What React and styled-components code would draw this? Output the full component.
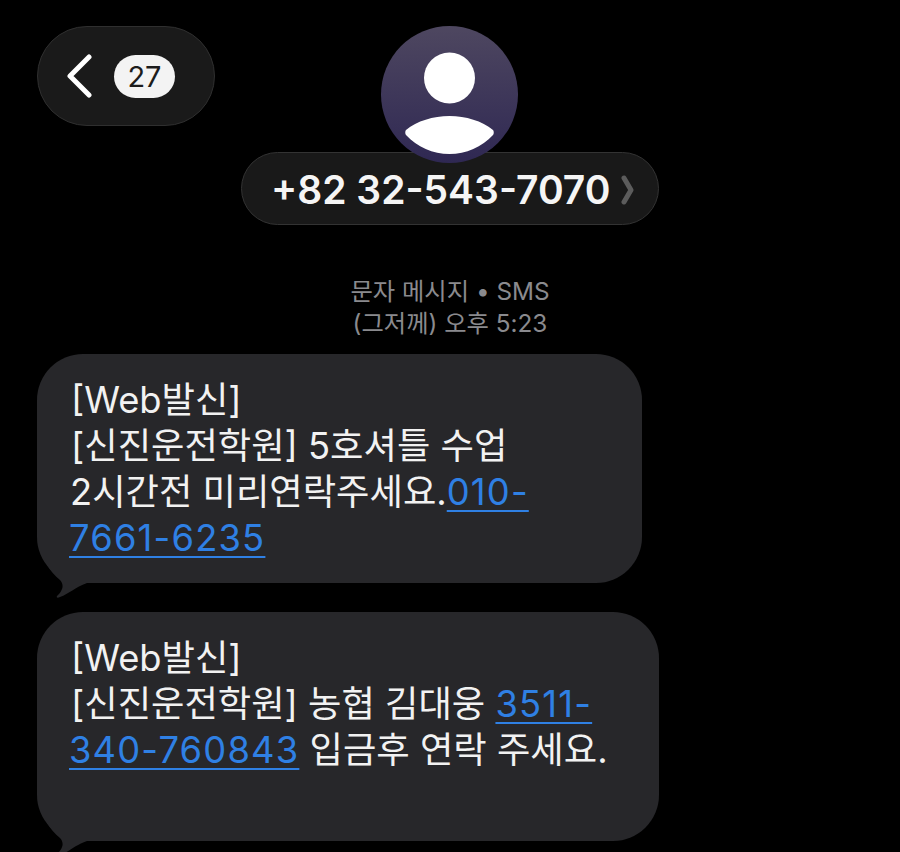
import React from "react";
import styled, { createGlobalStyle } from "styled-components";

const GlobalStyle = createGlobalStyle`
  html, body {
    margin: 0;
    padding: 0;
    background: #000;
  }
`;

const Page = styled.div`
  width: 900px;
  height: 852px;
  overflow: hidden;
  background: #000;
  font-family: Inter, "Noto Sans CJK KR", sans-serif;
  color: #f5f5f5;
`;

const Header = styled.header`
  display: grid;
  grid-template-columns: 1fr auto 1fr;
  padding: 26px 37px 0;
`;

const BackPill = styled.div`
  width: 178px;
  height: 100px;
  box-sizing: border-box;
  display: flex;
  align-items: center;
  gap: 22px;
  padding: 0 0 0 28px;
  border-radius: 50px;
  background: #1a1a1a;
  border: 1.5px solid #2f2f2f;
`;

const CountBadge = styled.span`
  width: 61px;
  height: 43px;
  border-radius: 22px;
  background: #f3f3f3;
  color: #1c1c1c;
  font-size: 29px;
  line-height: 43px;
  text-align: center;
`;

const Contact = styled.div`
  display: flex;
  flex-direction: column;
  align-items: center;
`;

const Avatar = styled.svg`
  display: block;
  position: relative;
  z-index: 1;
  margin: 0 1px -11px 0;
`;

const NamePill = styled.div`
  width: 418px;
  height: 73px;
  box-sizing: border-box;
  display: flex;
  align-items: center;
  gap: 11px;
  padding: 2px 0 0 29px;
  border-radius: 37px;
  background: #191919;
  border: 1.5px solid #333;
  font-size: 39px;
  font-weight: 600;
  white-space: nowrap;
`;

const Meta = styled.div`
  margin-top: 50px;
  text-align: center;
  color: #8a8a8e;
  font-size: 24.3px;
  line-height: 32px;
`;

const Thread = styled.div`
  display: flex;
  flex-direction: column;
  gap: 29px;
  margin-top: 15px;
  padding-left: 37px;
`;

const Bubble = styled.div`
  position: relative;
  width: ${(props) => props.$width}px;
  height: 229px;
  box-sizing: border-box;
  padding: 23px 0 0 34px;
  border-radius: 46px;
  background: #27272a;
  font-size: 36.3px;
  line-height: 46px;
  color: #f2f2f2;
  white-space: nowrap;
`;

const Tail = styled.svg`
  position: absolute;
  left: 0;
  bottom: -18px;
`;

const PhoneLink = styled.span`
  color: #2f80e4;
  letter-spacing: 1.2px;
  text-decoration: underline;
  text-decoration-thickness: 2px;
  text-decoration-skip-ink: none;
  text-underline-offset: 5px;
`;

const Shift = styled.span`
  margin-left: ${(props) => props.$by}px;
`;

const MessageTail = () => (
  <Tail width="60" height="36" viewBox="0 0 60 36">
    <path d="M10 0 C13 5 18 11 23 15 C26 18 26 22 25 24 C24 27 22 29 20 31 C19 33 21 33 23 32 C32 29 38 22 50 18 L50 0 Z" fill="#27272a" />
  </Tail>
);

export default function App() {
  return (
    <Page>
      <GlobalStyle />
      <Header>
        <BackPill>
          <svg width="26" height="44" viewBox="0 0 26 44">
            <path d="M23 3 L4 22 L23 41" fill="none" stroke="#fff" strokeWidth="5" strokeLinecap="round" strokeLinejoin="round" />
          </svg>
          <CountBadge>27</CountBadge>
        </BackPill>
        <Contact>
          <Avatar width="137" height="137" viewBox="0 0 137 137">
            <defs>
              <linearGradient id="avatarFill" x1="0" y1="0" x2="0" y2="1">
                <stop offset="0" stopColor="#4e4760" />
                <stop offset="1" stopColor="#2f2853" />
              </linearGradient>
            </defs>
            <circle cx="68.5" cy="68.5" r="68.5" fill="url(#avatarFill)" />
            <circle cx="68.5" cy="52" r="25.5" fill="#fff" />
            <path d="M25 104 C36 95 52 90 68.5 90 C85 90 101 95 112 104 C113 105 113 108 112 109 C101 121 85 128 68.5 128 C52 128 36 121 25 109 C24 108 24 105 25 104 Z" fill="#fff" />
          </Avatar>
          <NamePill>
            +82 32-543-7070
            <svg width="14" height="30" viewBox="0 0 14 30">
              <path d="M3 3 L10 15 L3 27" fill="none" stroke="#5c5c5c" strokeWidth="5" strokeLinecap="round" strokeLinejoin="round" />
            </svg>
          </NamePill>
        </Contact>
      </Header>
      <Meta>
        문자 메시지 • SMS
        <br />
        (그저께) 오후 5:23
      </Meta>
      <Thread>
        <Bubble $width={605}>
          [Web발신]
          <br />
          [신진운전학원] 5호셔틀 수업
          <br />
          <Shift $by={-1}>2시간전 미리연락주세요.</Shift>
          <PhoneLink>010-</PhoneLink>
          <br />
          <Shift $by={-2}><PhoneLink>7661-6235</PhoneLink></Shift>
          <MessageTail />
        </Bubble>
        <Bubble $width={622}>
          [Web발신]
          <br />
          [신진운전학원] 농협 김대웅 <PhoneLink>3511-</PhoneLink>
          <br />
          <Shift $by={-2}><PhoneLink>340-760843</PhoneLink></Shift> 입금후 연락 주세요.
          <MessageTail />
        </Bubble>
      </Thread>
    </Page>
  );
}
